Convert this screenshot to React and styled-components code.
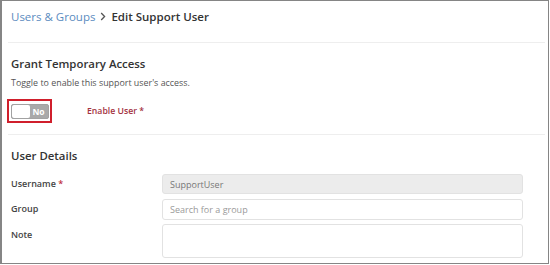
import styled, { createGlobalStyle } from "styled-components";

const GlobalStyle = createGlobalStyle`
  * {
    box-sizing: border-box;
  }
  html, body {
    margin: 0;
    padding: 0;
    background: #fff;
  }
  body {
    font-family: "Open Sans", "Liberation Sans", sans-serif;
    color: #333;
  }
`;

const Frame = styled.div`
  width: 549px;
  height: 264px;
  border: 1px solid #858585;
  border-left-width: 2px;
  overflow: hidden;
  background: #fff;
`;

const Header = styled.div`
  height: 42px;
  margin: 0 3px 0 6px;
  padding: 0 0 10px 3px;
  display: flex;
  align-items: center;
  gap: 5px;
  font-size: 11.5px;
  border-bottom: 1px solid #eeeeee;
`;

const Crumb = styled.a`
  color: #5b8cc0;
  text-decoration: none;
`;

const Chevron = styled.svg`
  width: 6px;
  height: 9px;
`;

const Current = styled.span`
  font-weight: 600;
  color: #333;
`;

const Section = styled.section`
  margin: 0 3px 0 6px;
  padding: ${(p) => p.$pad};
  border-bottom: ${(p) => (p.$last ? "none" : "1px solid #eeeeee")};
`;

const Title = styled.h2`
  margin: 0;
  font-size: 11.4px;
  font-weight: 600;
  color: #333;
  line-height: 16px;
`;

const Hint = styled.p`
  margin: 5px 0 0;
  font-size: 8.9px;
  color: #555;
  line-height: 12px;
`;

const ToggleRow = styled.div`
  display: flex;
  align-items: center;
  gap: 35px;
  margin: 10px 0 0 -4px;
`;

const Highlight = styled.div`
  border: 2px solid #d01f2c;
  width: 45px;
  height: 24px;
  display: flex;
  align-items: center;
  justify-content: center;
`;

const Switch = styled.div`
  display: flex;
  width: 38px;
  height: 15px;
  border-radius: 2px;
  background: #a9a9a9;
  border: 1px solid #a2a2a2;
  overflow: hidden;
`;

const Knob = styled.span`
  width: 18px;
  background: #fff;
  border-radius: 2px;
`;

const SwitchLabel = styled.span`
  flex: 1;
  color: #fff;
  font-size: 8.5px;
  font-weight: 700;
  line-height: 13px;
  text-align: center;
`;

const EnableLabel = styled.span`
  font-size: 8.7px;
  font-weight: 600;
  color: #a3323f;
`;

const FormGrid = styled.div`
  display: grid;
  grid-template-columns: 151px 361px;
  grid-template-rows: 20px 21px 34px;
  row-gap: 5px;
  margin-top: 10px;
`;

const Label = styled.label`
  font-size: 9px;
  font-weight: 600;
  color: #444;
  line-height: 20px;
`;

const Required = styled.span`
  color: #c0303c;
`;

const Input = styled.input`
  height: 100%;
  border: 1px solid #e2e2e2;
  border-radius: 3px;
  padding: 0 7px;
  font-family: inherit;
  font-size: 9px;
  color: #777;
  background: ${(p) => (p.$disabled ? "#ececec" : "#fff")};
  outline: none;
  &::placeholder {
    color: #9a9a9a;
  }
`;

const Note = styled.textarea`
  height: 34px;
  margin-top: -1px;
  border: 1px solid #e2e2e2;
  border-radius: 3px;
  resize: none;
  font-family: inherit;
  outline: none;
`;

function Breadcrumb() {
  return (
    <Header>
      <Crumb href="#">Users &amp; Groups</Crumb>
      <Chevron viewBox="0 0 6 9">
        <path d="M1.2 1 L4.6 4.5 L1.2 8" fill="none" stroke="#555" strokeWidth="1.3" />
      </Chevron>
      <Current>Edit Support User</Current>
    </Header>
  );
}

function AccessSection() {
  return (
    <Section $pad="13px 0 11px 3px">
      <Title>Grant Temporary Access</Title>
      <Hint>Toggle to enable this support user's access.</Hint>
      <ToggleRow>
        <Highlight>
          <Switch>
            <Knob />
            <SwitchLabel>No</SwitchLabel>
          </Switch>
        </Highlight>
        <EnableLabel>Enable User *</EnableLabel>
      </ToggleRow>
    </Section>
  );
}

function DetailsSection() {
  return (
    <Section $last $pad="13px 0 0 3px">
      <Title>User Details</Title>
      <FormGrid>
        <Label>
          Username <Required>*</Required>
        </Label>
        <Input $disabled value="SupportUser" readOnly />
        <Label>Group</Label>
        <Input placeholder="Search for a group" />
        <Label>Note</Label>
        <Note />
      </FormGrid>
    </Section>
  );
}

export default function App() {
  return (
    <Frame>
      <GlobalStyle />
      <Breadcrumb />
      <AccessSection />
      <DetailsSection />
    </Frame>
  );
}
